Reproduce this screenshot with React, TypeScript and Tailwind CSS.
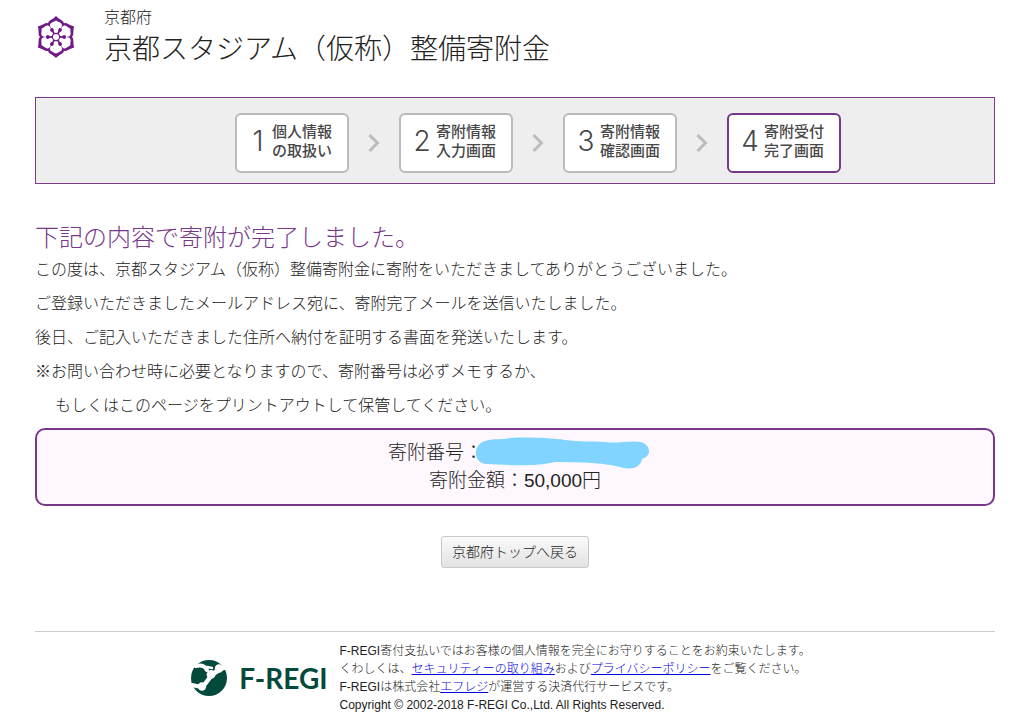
import type { ReactNode } from "react";

const petals = [0, 60, 120, 180, 240, 300];

function Emblem() {
  return (
    <svg viewBox="-21 -23 42 46" className="h-[46px] w-[42px]" role="img" aria-label="京都府">
      <g fill="#701b85">
        {petals.map((a) => (
          <path key={a} transform={`rotate(${a})`} d="M0 0L-8 -13C-8 -17 -3.5 -17 0 -21C3.5 -17 8 -17 8 -13Z" />
        ))}
      </g>
      <g fill="#fff">
        {petals.map((a) => (
          <path key={a} transform={`rotate(${a})`} d="M-2.4 -3L-5.8 -10.5C-7 -14.6 -3 -14.6 0 -16.6C3 -14.6 7 -14.6 5.8 -10.5L2.4 -3Z" />
        ))}
      </g>
      <g fill="#701b85" stroke="#701b85">
        {petals.map((a) => (
          <g key={a} transform={`rotate(${a + 30})`}>
            <path d="M0 -3V-8" strokeWidth="1.8" />
            <circle cy="-8.2" r="1.9" stroke="none" />
          </g>
        ))}
      </g>
      <circle r="3.6" fill="#fff" stroke="#701b85" strokeWidth="1.2" />
    </svg>
  );
}

function RegiMark() {
  return (
    <svg viewBox="0 0 46 44" className="h-11 w-[46px]" aria-hidden="true">
      <circle cx="22" cy="22" r="18" fill="#03493c" />
      <g fill="none" stroke="#fff" strokeLinecap="round">
        <path d="M9 10Q17 8 20 14" strokeWidth="4" />
        <path d="M20 11L25 12" strokeWidth="2.5" />
        <path d="M39 11L33 13L26 18" strokeWidth="5" />
        <path d="M24 20L18 28" strokeWidth="4.5" />
        <path d="M14 31L5 29" strokeWidth="4" />
      </g>
      <g fill="#fff">
        <circle cx="32" cy="12.5" r="4.2" />
        <circle cx="24" cy="18.5" r="4.4" />
        <circle cx="15" cy="30.5" r="4.2" />
      </g>
    </svg>
  );
}

function Chevron() {
  return (
    <svg viewBox="0 0 12 20" className="h-5 w-3" fill="none" stroke="#bcbcbc" strokeWidth="3" aria-hidden="true">
      <path d="M1.5 2L9.5 10L1.5 18" />
    </svg>
  );
}

const steps = [
  { no: 1, first: "個人情報", second: "の取扱い" },
  { no: 2, first: "寄附情報", second: "入力画面" },
  { no: 3, first: "寄附情報", second: "確認画面" },
  { no: 4, first: "寄附受付", second: "完了画面" },
];

function Steps() {
  return (
    <ol className="mt-[26px] flex items-center justify-center gap-[19px] border border-[#7d3a8c] bg-[#eeeeee] pt-[15px] pb-[10px] pl-[46px]">
      {steps.map((s) => (
        <li key={s.no} className="flex items-center gap-[19px]">
          {s.no > 1 && <Chevron />}
          <div
            aria-current={s.no === 4 ? "step" : undefined}
            className={`flex h-[60px] w-[114px] items-center gap-1 rounded-md border-2 bg-white pb-1 pl-[11px] text-[#484848] ${
              s.no === 4 ? "border-[#77388a]" : "border-[#bababa]"
            }`}
          >
            <span className="w-5 text-center font-[Inter,sans-serif] text-[28px] leading-8 font-light">{s.no}</span>
            <span className="text-[15px] leading-[19px] font-medium">
              {s.first}
              <br />
              {s.second}
            </span>
          </div>
        </li>
      ))}
    </ol>
  );
}

function FootLink({ children }: { children: ReactNode }) {
  return (
    <a href="#" className="text-[#0000dd] underline">
      {children}
    </a>
  );
}

export default function App() {
  return (
    <div className="bg-white pr-7 pl-[35px] font-['Liberation_Sans','Noto_Sans_CJK_JP',sans-serif] font-light text-[#222222]">
      <header className="flex items-start gap-[27px] pt-2">
        <div className="pt-[6px]">
          <Emblem />
        </div>
        <div>
          <p className="text-[16px] leading-5">京都府</p>
          <h1 className="text-[28px] leading-[43px]">京都スタジアム（仮称）整備寄附金</h1>
        </div>
      </header>

      <Steps />

      <main>
        <h2 className="mt-[38px] text-[24px] leading-[31px] text-[#77388a]">下記の内容で寄附が完了しました。</h2>
        <div className="text-[16px] leading-[34px]">
          <p>この度は、京都スタジアム（仮称）整備寄附金に寄附をいただきましてありがとうございました。</p>
          <p>ご登録いただきましたメールアドレス宛に、寄附完了メールを送信いたしました。</p>
          <p>後日、ご記入いただきました住所へ納付を証明する書面を発送いたします。</p>
          <p>※お問い合わせ時に必要となりますので、寄附番号は必ずメモするか、</p>
          <p className="pl-5">もしくはこのページをプリントアウトして保管してください。</p>
        </div>

        <div className="mt-[5px] rounded-[10px] border-2 border-[#77388a] bg-[#fef8fe] py-[9px] text-center text-[19px] leading-7">
          <p className="flex items-center justify-center">
            寄附番号：
            <svg viewBox="0 0 175 34" className="-my-2 -mr-2 -ml-2 h-[34px] w-[175px]" aria-hidden="true">
              <path
                fill="#80d4ff"
                d="M10 5C20 2 28 4 35 2C55 1 75 2 90 4C105 6 115 5 130 6C142 8 155 4 166 6C176 9 177 20 167 23C165 33 155 34 145 31C120 25 95 27 80 26C60 31 30 29 12 28C-2 28 -3 9 10 5Z"
              />
            </svg>
          </p>
          <p>寄附金額：50,000円</p>
        </div>

        <div className="mt-[30px] flex justify-center">
          <button
            type="button"
            className="h-8 rounded-[3px] border border-[#c8c8c8] bg-linear-to-b from-[#fafafa] to-[#e2e2e2] px-[10px] text-[14px] leading-5"
          >
            京都府トップへ戻る
          </button>
        </div>
      </main>

      <footer className="mt-[63px] flex justify-center gap-3 border-t border-[#cccccc] pt-[10px] pr-8">
        <div className="flex items-center gap-[6px]">
          <RegiMark />
          <span className="font-[Lato,sans-serif] text-[28px] leading-8 font-bold text-[#03493c]">F-REGI</span>
        </div>
        <div className="text-[12px] leading-[18px]">
          <p>F-REGI寄付支払いではお客様の個人情報を完全にお守りすることをお約束いたします。</p>
          <p>
            くわしくは、<FootLink>セキュリティーの取り組み</FootLink>および<FootLink>プライバシーポリシー</FootLink>をご覧ください。
          </p>
          <p>
            F-REGIは株式会社<FootLink>エフレジ</FootLink>が運営する決済代行サービスです。
          </p>
          <p>Copyright © 2002-2018 F-REGI Co.,Ltd. All Rights Reserved.</p>
        </div>
      </footer>
    </div>
  );
}
